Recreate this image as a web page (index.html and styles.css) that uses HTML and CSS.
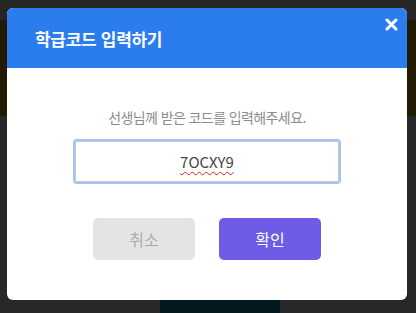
FILE: index.html
```html
<!DOCTYPE html>
<html lang="ko">
<head>
    <meta charset="UTF-8">
    <meta name="viewport" content="width=device-width, initial-scale=1.0">
    <title>학급코드 입력하기</title>
    <link rel="stylesheet" href="styles.css">
</head>
<body>
    <div class="backdrop">
        <div class="backdrop-bar"></div>
        <div class="backdrop-band"></div>
        <div class="backdrop-shape"></div>
    </div>

    <div class="modal">
        <div class="modal-header">
            <h2 class="modal-title">학급코드 입력하기</h2>
            <button type="button" class="modal-close" aria-label="닫기">
                <svg width="13" height="13" viewBox="0 0 13 13">
                    <path d="M2 2 L11 11 M11 2 L2 11" stroke="#fff" stroke-width="3" stroke-linecap="round"/>
                </svg>
            </button>
        </div>
        <div class="modal-body">
            <p class="modal-text">선생님께 받은 코드를 입력해주세요.</p>
            <div class="code-field"><span class="code-value">7OCXY9</span></div>
            <div class="modal-actions">
                <button type="button" class="btn btn-cancel">취소</button>
                <button type="button" class="btn btn-confirm">확인</button>
            </div>
        </div>
    </div>
</body>
</html>
```

FILE: styles.css
```css
* {
    box-sizing: border-box;
}

body {
    margin: 0;
    padding-top: 8px;
    height: 313px;
    overflow: hidden;
    position: relative;
    background-color: #282828;
    font-family: "Noto Sans CJK KR", "Noto Sans", sans-serif;
}

.backdrop {
    position: absolute;
    inset: 0;
}

.backdrop-bar {
    height: 20px;
    background-color: #262626;
}

.backdrop-band {
    height: 96px;
    background-color: #221a04;
}

.backdrop-shape {
    position: absolute;
    left: 160px;
    top: 300px;
    width: 120px;
    height: 13px;
    background-color: #041820;
}

.modal {
    position: relative;
    width: 400px;
    margin-left: 7px;
    background-color: #fff;
    border-radius: 6px;
    overflow: hidden;
}

.modal-header {
    height: 60px;
    display: flex;
    justify-content: space-between;
    align-items: center;
    background-color: #2b7ded;
    padding-left: 28px;
}

.modal-title {
    margin: 0;
    color: #fff;
    font-size: 17px;
    font-weight: bold;
    letter-spacing: -0.3px;
}

.modal-close {
    align-self: flex-start;
    margin: 10px 9px 0 0;
    padding: 0;
    width: 13px;
    height: 13px;
    border: none;
    background: none;
    cursor: pointer;
}

.modal-close svg {
    display: block;
}

.modal-body {
    display: flex;
    flex-direction: column;
    align-items: center;
    padding: 39px 0 40px;
}

.modal-text {
    margin: 0;
    height: 20px;
    line-height: 20px;
    font-size: 14px;
    color: #8c8c8c;
    letter-spacing: -0.6px;
}

.code-field {
    margin-top: 14px;
    width: 264px;
    height: 41px;
    border: 1px solid #c8c8c8;
    border-radius: 2px;
    box-shadow: 0 0 0 2px #a2c3f4;
    display: flex;
    justify-content: center;
    align-items: center;
    font-size: 15px;
    color: #444;
}

.code-value {
    text-decoration: underline wavy #e02020;
    text-underline-offset: 3px;
    text-decoration-thickness: 1px;
}

.modal-actions {
    margin-top: 36px;
    display: flex;
    gap: 24px;
}

.btn {
    width: 102px;
    height: 42px;
    border: none;
    border-radius: 5px;
    font-family: inherit;
    font-size: 16px;
    cursor: pointer;
}

.btn-cancel {
    background-color: #e4e4e4;
    color: #ababab;
}

.btn-confirm {
    background-color: #6e5be6;
    color: #fff;
}
```
